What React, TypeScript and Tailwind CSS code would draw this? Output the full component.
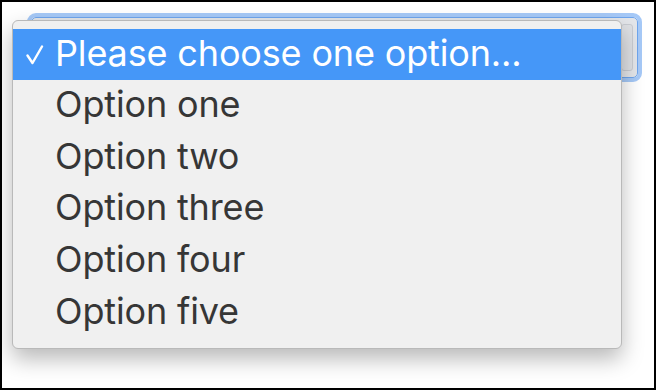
import React from "react";

const OPTIONS = ["Option one", "Option two", "Option three", "Option four", "Option five"];

export default function App() {
  return (
    <div
      className="relative h-[390px] w-[656px] overflow-hidden border-2 border-black bg-white"
      style={{ fontFamily: "Inter, 'Noto Sans', sans-serif" }}
    >
      {/* the select underneath, with its focus ring */}
      <div className="absolute left-[25px] top-[11px] h-[69px] w-[615px] rounded-[9px] border-[4px] border-[#a6c9f7]">
        <div className="h-full w-full rounded-[5px] border border-[#6fa6ee] bg-[#e4e6ea]">
          <div className="ml-auto mr-[4px] mt-[6px] h-[47px] w-[12px] rounded-[3px] border border-[#c9ccd2] bg-[#dfe1e5]" />
        </div>
      </div>

      {/* the open menu */}
      <div className="absolute left-[10px] top-[18px] w-[610px] rounded-[6px] border border-[#b9b9b9] bg-[#f0f0f0] pb-[10px] pt-[8px] shadow-[0_10px_22px_rgba(0,0,0,0.28)]">
        <div className="flex h-[51px] items-center bg-[#4597f8] text-white">
          <span className="flex w-[42px] justify-start pl-[13px]">
            <svg width="18" height="20" viewBox="0 0 18 20" fill="none">
              <path d="M1.5 10.5 L6.5 18 L16 1.5" stroke="white" strokeWidth="2.4" strokeLinecap="round" strokeLinejoin="round" />
            </svg>
          </span>
          <span className="-mt-[3px] text-[36px] leading-none tracking-[-0.15px]">Please choose one option...</span>
        </div>
        {OPTIONS.map((o) => (
          <div key={o} className="flex h-[51.6px] items-center text-[#363636]">
            <span className="w-[42px]" />
            <span className="-mt-[3px] text-[36px] leading-none tracking-[-0.15px]">{o}</span>
          </div>
        ))}
      </div>
    </div>
  );
}
